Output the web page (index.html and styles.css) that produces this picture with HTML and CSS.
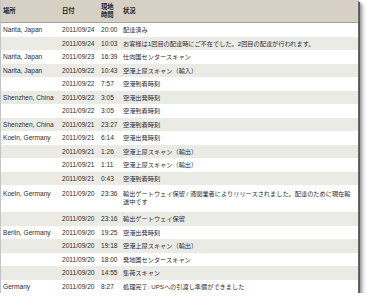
FILE: index.html
```html
<!DOCTYPE html>
<html lang="ja">
<head>
<meta charset="utf-8">
<link rel="stylesheet" href="styles.css">
</head>
<body>
<div class="sheet">
<table class="track">
<colgroup><col class="c-loc"><col class="c-date"><col class="c-time"><col class="c-status"></colgroup>
<thead>
<tr><th>場所</th><th>日付</th><th class="th-two">現地<br>時間</th><th>状況</th></tr>
</thead>
<tbody>
<tr><td>Narita, Japan</td><td>2011/09/24</td><td>20:00</td><td class="st">配達済み</td></tr>
<tr><td></td><td>2011/09/24</td><td>10:03</td><td class="st">お客様は1回目の配達時にご不在でした。2回目の配達が行われます。</td></tr>
<tr><td>Narita, Japan</td><td>2011/09/23</td><td>16:39</td><td class="st">仕向国センタースキャン</td></tr>
<tr><td>Narita, Japan</td><td>2011/09/22</td><td>10:43</td><td class="st">空港上屋スキャン（輸入）</td></tr>
<tr><td></td><td>2011/09/22</td><td>7:57</td><td class="st">空港到着時刻</td></tr>
<tr><td>Shenzhen, China</td><td>2011/09/22</td><td>3:05</td><td class="st">空港出発時刻</td></tr>
<tr><td></td><td>2011/09/22</td><td>3:05</td><td class="st">空港到着時刻</td></tr>
<tr><td>Shenzhen, China</td><td>2011/09/21</td><td>23:27</td><td class="st">空港到着時刻</td></tr>
<tr><td>Koeln, Germany</td><td>2011/09/21</td><td>6:14</td><td class="st">空港出発時刻</td></tr>
<tr><td></td><td>2011/09/21</td><td>1:26</td><td class="st">空港上屋スキャン（輸出）</td></tr>
<tr><td></td><td>2011/09/21</td><td>1:11</td><td class="st">空港上屋スキャン（輸出）</td></tr>
<tr><td></td><td>2011/09/21</td><td>0:43</td><td class="st">空港到着時刻</td></tr>
<tr class="tall"><td>Koeln, Germany</td><td>2011/09/20</td><td>23:36</td><td class="st">輸出ゲートウェイ保留 / 通関業者によりリリースされました。配達のために現在輸<br>送中です</td></tr>
<tr><td></td><td>2011/09/20</td><td>23:16</td><td class="st">輸出ゲートウェイ保留</td></tr>
<tr><td>Berlin, Germany</td><td>2011/09/20</td><td>19:25</td><td class="st">空港出発時刻</td></tr>
<tr><td></td><td>2011/09/20</td><td>19:18</td><td class="st">空港上屋スキャン（輸出）</td></tr>
<tr><td></td><td>2011/09/20</td><td>18:00</td><td class="st">発地国センタースキャン</td></tr>
<tr><td></td><td>2011/09/20</td><td>14:55</td><td class="st">集荷スキャン</td></tr>
<tr><td>Germany</td><td>2011/09/20</td><td>8:27</td><td class="st">処理完了: UPSへの引渡し準備ができました</td></tr>
</tbody>
</table>
</div>
</body>
</html>
```
FILE: styles.css
```css
html, body {
  margin: 0;
  padding: 0;
  background: #ffffff;
}
.sheet {
  width: 358px;
  height: 293px;
  box-sizing: border-box;
  border-left: 1px solid #c4c4c4;
  background: #ffffff;
  box-shadow: 1px 1px 0 #6a6a6a, 2px 2px 0 #555555, 3px 3px 3px #8a8a8a, 5px 5px 4px #c8c8c8;
  overflow: hidden;
}
.track {
  width: 357px;
  border-collapse: collapse;
  table-layout: fixed;
  font-family: "Liberation Sans", "Noto Sans CJK JP", sans-serif;
  font-size: 6.6px;
  color: #2c2c2c;
}
.c-loc { width: 59px; }
.c-date { width: 39px; }
.c-time { width: 22px; }
.c-status { width: auto; }
.track th {
  height: 22px;
  padding: 0 2px;
  background: #d7d0c5;
  border-bottom: 1px solid #aaa294;
  text-align: left;
  vertical-align: middle;
  font-weight: bold;
  color: #222222;
  line-height: 8px;
  font-size: 6.3px;
}
.track td {
  height: 13.5px;
  box-sizing: border-box;
  padding: 3px 2px 3px;
  line-height: 7.5px;
  vertical-align: top;
  white-space: nowrap;
}
.track td.st {
  font-size: 6.2px;
}
.track tbody tr:nth-child(even) td {
  background: #ebebe6;
}
.track tr.tall td {
  height: 27px;
  padding-top: 5px;
}
```
